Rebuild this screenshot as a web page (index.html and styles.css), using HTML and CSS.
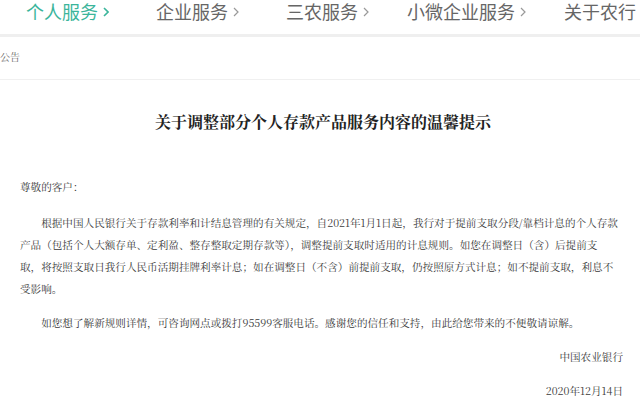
FILE: index.html
```html
<!DOCTYPE html>
<html lang="zh-CN">
<head>
<meta charset="utf-8">
<title>关于调整部分个人存款产品服务内容的温馨提示</title>
<link rel="stylesheet" href="styles.css">
</head>
<body>
<nav class="nav">
  <a class="nav-item active wide">个人服务<svg class="chev" viewBox="0 0 6 10"><path d="M1 1 L5 5 L1 9"/></svg></a>
  <a class="nav-item wide">企业服务<svg class="chev" viewBox="0 0 6 10"><path d="M1 1 L5 5 L1 9"/></svg></a>
  <a class="nav-item">三农服务<svg class="chev" viewBox="0 0 6 10"><path d="M1 1 L5 5 L1 9"/></svg></a>
  <a class="nav-item">小微企业服务<svg class="chev" viewBox="0 0 6 10"><path d="M1 1 L5 5 L1 9"/></svg></a>
  <a class="nav-item">关于农行<svg class="chev" viewBox="0 0 6 10"><path d="M1 1 L5 5 L1 9"/></svg></a>
</nav>
<div class="crumb">公告</div>
<main class="article">
  <h1 class="title">关于调整部分个人存款产品服务内容的温馨提示</h1>
  <p class="greet">尊敬的客户：</p>
  <p class="para indent">根据中国人民银行关于存款利率和计结息管理的有关规定，自2021年1月1日起，我行对于提前支取分段/靠档计息的个人存款<br>产品（包括个人大额存单、定利盈、整存整取定期存款等），调整提前支取时适用的计息规则。如您在调整日（含）后提前支<br>取，将按照支取日我行人民币活期挂牌利率计息；如在调整日（不含）前提前支取，仍按照原方式计息；如不提前支取，利息不<br>受影响。</p>
  <p class="para indent">如您想了解新规则详情，可咨询网点或拨打95599客服电话。感谢您的信任和支持，由此给您带来的不便敬请谅解。</p>
  <p class="para right">中国农业银行</p>
  <p class="para right">2020年12月14日</p>
</main>
</body>
</html>
```
FILE: styles.css
```css
* { box-sizing: border-box; }
html, body { margin: 0; padding: 0; background: #fff; }
body { font-family: "Noto Sans CJK SC", sans-serif; overflow: hidden; width: 640px; height: 411px; }

.nav {
  display: flex;
  align-items: flex-start;
  height: 37px;
  padding: 0 0 0 26px;
  border-bottom: 3px solid #efefef;
  white-space: nowrap;
}
.nav-item {
  display: flex;
  align-items: center;
  font-size: 18px;
  line-height: 22px;
  color: #666;
  margin-right: 38px;
  flex: none;
}
.nav-item.wide { margin-right: 47px; }
.nav-item.active { color: #3bb59b; }
.chev {
  width: 6px;
  height: 10px;
  margin-left: 5px;
  margin-top: 2px;
  fill: none;
  stroke: #999;
  stroke-width: 1.2;
}
.nav-item.active .chev { stroke: #3bb59b; stroke-width: 1.6; }

.crumb {
  height: 43px;
  padding-top: 13px;
  font-family: "Noto Serif CJK SC", "Noto Sans CJK SC", serif;
  font-size: 10px;
  line-height: 14px;
  color: #666;
  border-bottom: 1px solid #f0f0f0;
}

.article {
  padding: 0 17px 0 20px;
  font-family: "Noto Serif CJK SC", "Noto Sans CJK SC", serif;
  color: #3a3a3a;
}
.title {
  margin: 30px 0 0;
  text-align: center;
  font-size: 16px;
  line-height: 24px;
  font-weight: bold;
  color: #222;
  padding-left: 3px;
}
.greet {
  margin: 42px 0 0;
  font-size: 10.6px;
  line-height: 22px;
}
.para {
  margin: 12px 0 0;
  font-size: 10.6px;
  line-height: 22px;
  white-space: nowrap;
}
.greet + .para { margin-top: 14px; }
.indent { text-indent: 2em; }
.right { text-align: right; }
```
